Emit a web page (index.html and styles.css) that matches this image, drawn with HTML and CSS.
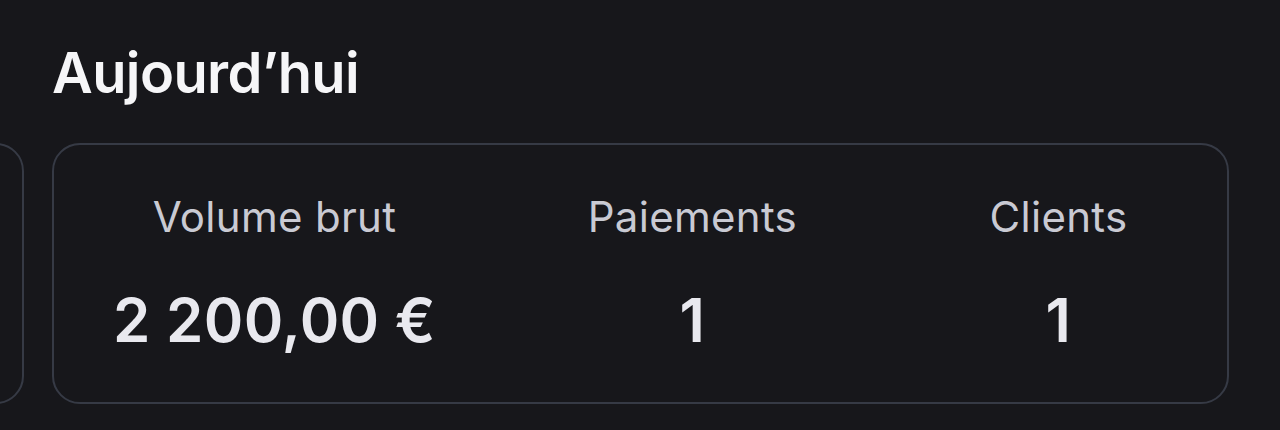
FILE: index.html
```html
<!doctype html>
<html lang="fr">
    <head>
        <meta charset="utf-8" />
        <link rel="stylesheet" href="styles.css">
    </head>
    <body>
        <section class="today">
            <h1 class="today-title">Aujourd’hui</h1>

            <div class="cards">
                <div class="card card-prev"></div>

                <div class="card card-stats">
                    <div class="stat">
                        <div class="stat-label">Volume brut</div>
                        <div class="stat-value">2 200,00 €</div>
                    </div>
                    <div class="stat">
                        <div class="stat-label">Paiements</div>
                        <div class="stat-value">1</div>
                    </div>
                    <div class="stat">
                        <div class="stat-label">Clients</div>
                        <div class="stat-value">1</div>
                    </div>
                </div>
            </div>
        </section>
    </body>
</html>
```

FILE: styles.css
```css
html {
    margin: 0;
    width: 100%;
    height: 100%;
    background-color: #17171b;
}
body {
    margin: 0;
    padding: 0;
    width: 100%;
    min-height: 100%;
    background-color: #17171b;
    font-family: Inter, "Noto Sans", sans-serif;
    color: #ececf1;
    overflow: hidden;
}

.today {
    padding-top: 45px;
}
.today-title {
    margin: 0 0 42px 52px;
    font-size: 56px;
    line-height: 56px;
    font-weight: 600;
    letter-spacing: -0.6px;
    color: #f6f6f8;
}

.cards {
    display: flex;
    gap: 28px;
    padding-left: 52px;
}
.card {
    flex: none;
    box-sizing: border-box;
    height: 261px;
    border: 2px solid #363a45;
    border-radius: 28px;
    background-color: #17171b;
}
.card-prev {
    width: 300px;
    margin-left: -328px;
}

.card-stats {
    width: 1177px;
    display: grid;
    grid-template-columns: 442fr 396fr 338fr;
    padding: 51px 0 0 0;
}
.stat {
    display: flex;
    flex-direction: column;
    align-items: center;
    gap: 52px;
}
.stat-label {
    font-size: 42px;
    line-height: 42px;
    font-weight: 400;
    letter-spacing: 0.3px;
    color: #c9cad3;
}
.stat-value {
    font-size: 60px;
    line-height: 60px;
    font-weight: 600;
    letter-spacing: 0.3px;
    color: #e9e9ef;
}
```
